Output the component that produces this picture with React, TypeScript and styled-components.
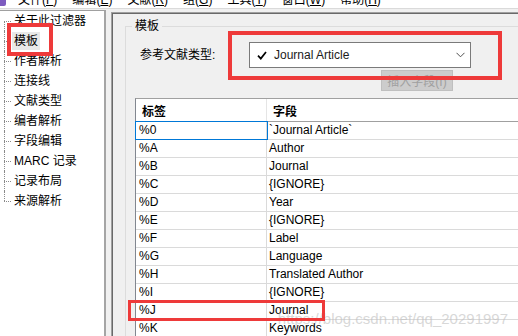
import React from 'react'
import styled, { createGlobalStyle } from 'styled-components'

const GlobalStyle = createGlobalStyle`
  html, body {
    margin: 0;
    padding: 0;
    background: #ffffff;
  }
  body {
    font-family: "Liberation Sans", "Noto Sans CJK SC", sans-serif;
  }
`

const Window = styled.div`
  position: relative;
  width: 518px;
  height: 336px;
  overflow: hidden;
  display: flex;
  flex-direction: column;
  background: #f0f0f0;
  font-size: 12px;
  color: #000;
`

const MenuBar = styled.div`
  flex: none;
  height: 8px;
  display: flex;
  overflow: hidden;
  background: #ffffff;
  border-bottom: 1px solid #dadada;
`

const AppIcon = styled.span`
  width: 6px;
  height: 6px;
  margin-right: 12px;
  background: #7d5bbf;
  border-radius: 0 0 2px 0;
`

const MenuItem = styled.span`
  margin-right: 15px;
  margin-top: -7px;
  line-height: 14px;
  white-space: nowrap;

  u {
    text-decoration: underline;
  }
`

const Body = styled.div`
  flex: 1;
  min-height: 0;
  display: flex;
  padding-top: 1px;
`

const LeftPanel = styled.div`
  width: 104px;
  flex: none;
  background: #ffffff;
  border-top: 1px solid #a0a0a0;
  border-right: 2px solid #a5a5a5;
`

const TreeList = styled.ul`
  list-style: none;
  margin: 0;
  padding: 0;
`

const TreeItem = styled.li`
  position: relative;
  height: 20px;
  padding-left: 12px;
  display: flex;
  align-items: center;

  &::before {
    content: '';
    position: absolute;
    left: 4px;
    top: 10px;
    width: 7px;
    border-top: 1px dotted #8a8a8a;
  }

  &::after {
    content: '';
    position: absolute;
    left: 4px;
    top: 0;
    bottom: 0;
    border-left: 1px dotted #8a8a8a;
  }

  &:first-child::after {
    top: 10px;
  }

  &:last-child::after {
    bottom: 10px;
  }
`

const TreeLabel = styled.span<{ $selected?: boolean }>`
  position: relative;
  padding: 0 2px;
  line-height: 18px;
  white-space: nowrap;
  background: ${({ $selected }) => ($selected ? '#e8e8e8' : 'transparent')};
`

const Annotation = styled.span<{ $w: number; $h: number; $l: number; $t: number; $b: number }>`
  position: absolute;
  left: ${({ $l }) => $l}px;
  top: ${({ $t }) => $t}px;
  width: ${({ $w }) => $w}px;
  height: ${({ $h }) => $h}px;
  box-sizing: border-box;
  border: ${({ $b }) => $b}px solid #ee3a3a;
  pointer-events: none;
  z-index: 2;
`

const RightPanel = styled.div`
  flex: 1;
  margin-left: 5px;
  margin-top: 2px;
  padding: 6px 0 0 13px;
  overflow: hidden;
  border-left: 1px solid #a0a0a0;
  border-top: 1px solid #a0a0a0;
  box-shadow: inset 1px 1px 0 #696969;
`

const GroupBox = styled.fieldset`
  margin: 0 -30px 0 0;
  padding: 9px 0 0 0;
  min-height: 400px;
  border: 1px solid #dcdcdc;
`

const Legend = styled.legend`
  margin-left: 6px;
  padding: 0 3px;
  line-height: 14px;
  font-size: 12px;
`

const FormRow = styled.div`
  display: flex;
  align-items: center;
  padding-left: 14px;
`

const FieldLabel = styled.span`
  width: 109px;
  flex: none;
  margin-top: -3px;
`

const ComboWrap = styled.div`
  position: relative;
`

const Combo = styled.div`
  width: 222px;
  height: 26px;
  box-sizing: border-box;
  display: flex;
  align-items: center;
  padding: 0 5px 0 7px;
  background: #ffffff;
  border: 1px solid #7a7a7a;
`

const ComboText = styled.span`
  flex: 1;
  margin-left: 7px;
  color: #1b1b1b;
`

const ButtonRow = styled.div`
  display: flex;
  padding-left: 255px;
  margin-top: 2px;
`

const DisabledButton = styled.button`
  width: 72px;
  height: 21px;
  padding: 0;
  font: inherit;
  font-size: 12px;
  color: #a0a0a0;
  background: #cccccc;
  border: 1px solid #bfbfbf;
`

const Grid = styled.div`
  margin: 7px 0 0 9px;
  border-left: 1px solid #828790;
  border-top: 1px solid #a0a0a0;
  background: #ffffff;
`

const HeaderRow = styled.div`
  display: grid;
  grid-template-columns: 131px 1fr;
  height: 22px;
  border-bottom: 1px solid #a0a0a0;
  font-weight: bold;
`

const HeaderCell = styled.div`
  display: flex;
  align-items: center;
  padding-left: 6px;
  border-right: 1px solid #e5e5e5;
`

const Row = styled.div`
  position: relative;
  display: grid;
  grid-template-columns: 131px 1fr;
  height: 17px;
  border-bottom: 1px solid #dadada;
`

const Cell = styled.div<{ $first?: boolean; $focused?: boolean }>`
  display: flex;
  align-items: center;
  padding-left: ${({ $first }) => ($first ? 3 : 2)}px;
  white-space: nowrap;
  border-right: ${({ $first }) => ($first ? '1px solid #dadada' : 'none')};
  box-shadow: ${({ $focused }) => ($focused ? '0 0 0 1px #0078d7' : 'none')};
  line-height: 17px;
`

const Watermark = styled.div`
  position: absolute;
  right: 10px;
  bottom: 9px;
  font-size: 15px;
  color: rgba(190, 190, 190, 0.6);
  white-space: nowrap;
  pointer-events: none;
`

const menus = [
  ['文件', 'F'],
  ['编辑', 'E'],
  ['文献', 'R'],
  ['组', 'G'],
  ['工具', 'T'],
  ['窗口', 'W'],
  ['帮助', 'H'],
]

const treeItems = ['关于此过滤器', '模板', '作者解析', '连接线', '文献类型', '编者解析', '字段编辑', 'MARC 记录', '记录布局', '来源解析']

const tags = [
  ['%0', '`Journal Article`'],
  ['%A', 'Author'],
  ['%B', 'Journal'],
  ['%C', '{IGNORE}'],
  ['%D', 'Year'],
  ['%E', '{IGNORE}'],
  ['%F', 'Label'],
  ['%G', 'Language'],
  ['%H', 'Translated Author'],
  ['%I', '{IGNORE}'],
  ['%J', 'Journal'],
  ['%K', 'Keywords'],
]

const Check = () => (
  <svg width="10" height="9" viewBox="0 0 10 9">
    <path d="M1 4.6 L3.8 7.6 L9 1" fill="none" stroke="#000" strokeWidth="1.7" />
  </svg>
)

const Chevron = () => (
  <svg width="9" height="6" viewBox="0 0 9 6">
    <path d="M0.5 0.8 L4.5 4.8 L8.5 0.8" fill="none" stroke="#505050" strokeWidth="1" />
  </svg>
)

const App: React.FC = () => {
  return (
    <Window>
      <GlobalStyle />
      <MenuBar>
        <AppIcon />
        {menus.map(([name, key]) => (
          <MenuItem key={key}>
            {name}(<u>{key}</u>)
          </MenuItem>
        ))}
      </MenuBar>
      <Body>
        <LeftPanel>
          <TreeList>
            {treeItems.map((item) => (
              <TreeItem key={item}>
                <TreeLabel $selected={item === '模板'}>
                  {item}
                  {item === '模板' && <Annotation $l={-5} $t={-9} $w={46} $h={33} $b={4} />}
                </TreeLabel>
              </TreeItem>
            ))}
          </TreeList>
        </LeftPanel>
        <RightPanel>
          <GroupBox>
            <Legend>模板</Legend>
            <FormRow>
              <FieldLabel>参考文献类型:</FieldLabel>
              <ComboWrap>
                <Combo>
                  <Check />
                  <ComboText>Journal Article</ComboText>
                  <Chevron />
                </Combo>
                <Annotation $l={-21} $t={-11} $w={274} $h={49} $b={4} />
              </ComboWrap>
            </FormRow>
            <ButtonRow>
              <DisabledButton disabled>插入字段(I)</DisabledButton>
            </ButtonRow>
            <Grid>
              <HeaderRow>
                <HeaderCell>标签</HeaderCell>
                <HeaderCell>字段</HeaderCell>
              </HeaderRow>
              {tags.map(([tag, field], i) => (
                <Row key={tag}>
                  <Cell $first $focused={i === 0}>{tag}</Cell>
                  <Cell>{field}</Cell>
                  {tag === '%J' && <Annotation $l={-8} $t={-2} $w={197} $h={21} $b={3} />}
                </Row>
              ))}
            </Grid>
          </GroupBox>
        </RightPanel>
      </Body>
      <Watermark>https://blog.csdn.net/qq_20291997</Watermark>
    </Window>
  )
}

export default App
